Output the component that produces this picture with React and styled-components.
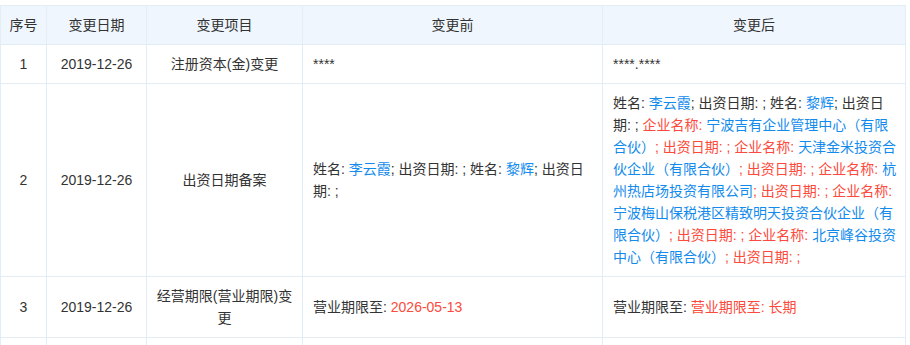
import React from "react";
import styled, { createGlobalStyle } from "styled-components";

const GlobalStyle = createGlobalStyle`
  body {
    margin: 0;
    background: #fff;
    font-family: "Liberation Sans", "Noto Sans CJK SC", sans-serif;
  }
`;

const Page = styled.div`
  padding-top: 5px;
  width: 910px;
`;

const Table = styled.table`
  width: 905px;
  border-collapse: collapse;
  table-layout: fixed;
  font-size: 14px;
  line-height: 22px;
  color: #333;
`;

const Th = styled.th`
  background: #f0f6fd;
  border: 1px solid #e3edf6;
  padding: 8px 6px;
  font-weight: normal;
  text-align: center;
  white-space: nowrap;
`;

const Td = styled.td`
  border: 1px solid #e3edf6;
  padding: ${(p) => (p.$left ? "8px 5px 8px 10px" : "8px 6px")};
  text-align: ${(p) => (p.$left ? "left" : "center")};
  vertical-align: middle;
  height: ${(p) => p.$h || "auto"};
  word-break: break-all;
`;

const Blue = styled.span`
  color: #128bed;
`;

const Red = styled.span`
  color: #fd4a3c;
`;

const cols = [46, 100, 156, 300, 303];

const rows = [
  {
    no: "1",
    date: "2019-12-26",
    item: "注册资本(金)变更",
    before: "****",
    after: "****.****",
  },
  {
    no: "2",
    date: "2019-12-26",
    item: "出资日期备案",
    before: (
      <>
        姓名: <Blue>李云霞</Blue>; 出资日期: ; 姓名: <Blue>黎辉</Blue>; 出资日期: ;
      </>
    ),
    after: (
      <>
        姓名: <Blue>李云霞</Blue>; 出资日期: ; 姓名: <Blue>黎辉</Blue>; 出资日期: ;{" "}
        <Red>企业名称: </Red>
        <Blue>宁波吉有企业管理中心（有限合伙）</Blue>
        <Red>; 出资日期: ; 企业名称: </Red>
        <Blue>天津金米投资合伙企业（有限合伙）</Blue>
        <Red>; 出资日期: ; 企业名称: </Red>
        <Blue>杭州热店场投资有限公司</Blue>
        <Red>; 出资日期: ; 企业名称: </Red>
        <Blue>宁波梅山保税港区精致明天投资合伙企业（有限合伙）</Blue>
        <Red>; 出资日期: ; 企业名称: </Red>
        <Blue>北京峰谷投资中心（有限合伙）</Blue>
        <Red>; 出资日期: ;</Red>
      </>
    ),
  },
  {
    no: "3",
    date: "2019-12-26",
    item: "经营期限(营业期限)变更",
    before: (
      <>
        营业期限至: <Red>2026-05-13</Red>
      </>
    ),
    after: (
      <>
        营业期限至: <Red>营业期限至: 长期</Red>
      </>
    ),
  },
];

export default function App() {
  return (
    <Page>
      <GlobalStyle />
      <Table>
        <colgroup>
          {cols.map((w, i) => (
            <col key={i} style={{ width: w }} />
          ))}
        </colgroup>
        <thead>
          <tr>
            <Th>序号</Th>
            <Th>变更日期</Th>
            <Th>变更项目</Th>
            <Th>变更前</Th>
            <Th>变更后</Th>
          </tr>
        </thead>
        <tbody>
          {rows.map((r) => (
            <tr key={r.no}>
              <Td>{r.no}</Td>
              <Td>{r.date}</Td>
              <Td>{r.item}</Td>
              <Td $left>{r.before}</Td>
              <Td $left>{r.after}</Td>
            </tr>
          ))}
          <tr>
            <Td $h="22px"></Td>
            <Td></Td>
            <Td></Td>
            <Td $left></Td>
            <Td $left></Td>
          </tr>
        </tbody>
      </Table>
    </Page>
  );
}
